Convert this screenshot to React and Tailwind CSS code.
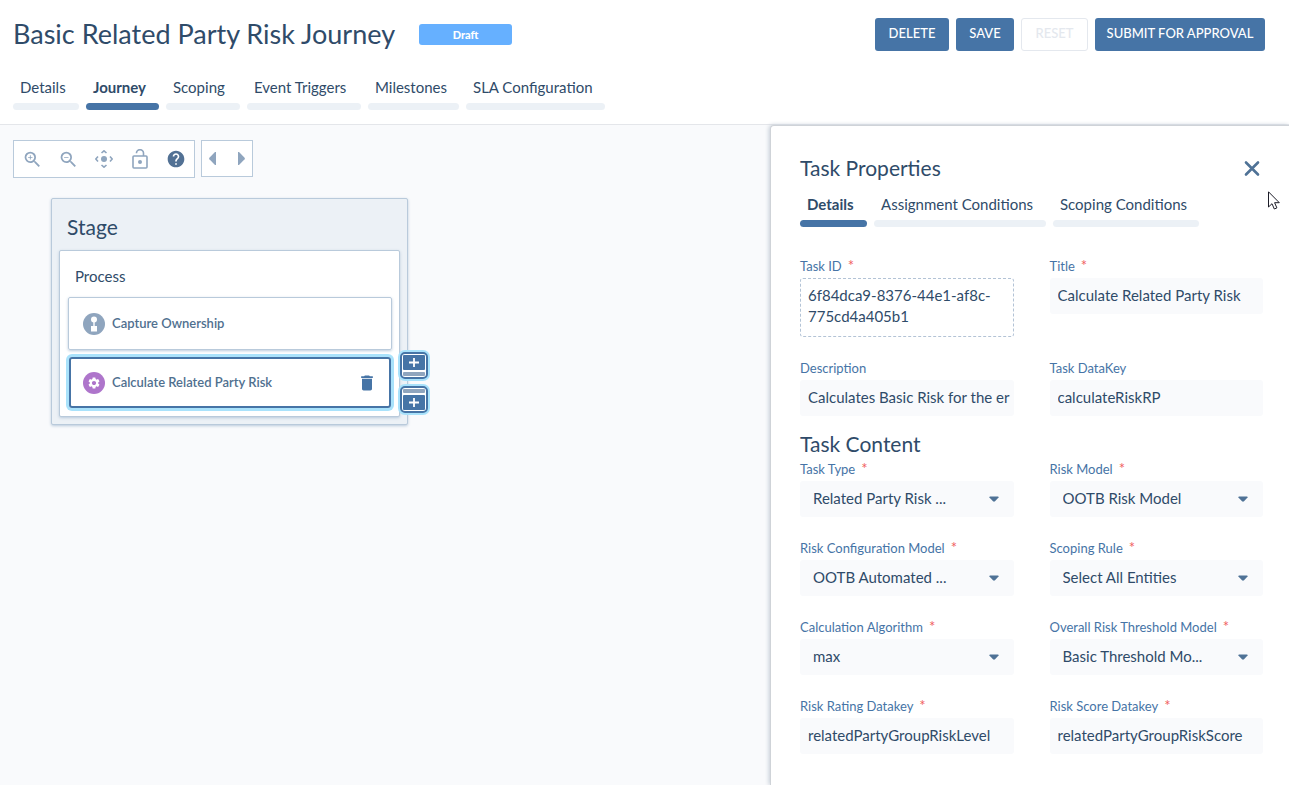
import React, { useState } from 'react';
import { MdDelete, MdHelp, MdSettings, MdZoomIn, MdZoomOut } from 'react-icons/md';

const journeyTabs = [
  { label: 'Details', width: 'w-[66px]' },
  { label: 'Journey', width: 'w-[73px]' },
  { label: 'Scoping', width: 'w-[74px]' },
  { label: 'Event Triggers', width: 'w-[114px]' },
  { label: 'Milestones', width: 'w-[91px]' },
  { label: 'SLA Configuration', width: 'w-[139px]' },
];

const taskTabs = [
  { label: 'Details', width: 'w-[67px]' },
  { label: 'Assignment Conditions', width: 'w-[172px]' },
  { label: 'Scoping Conditions', width: 'w-[146px]' },
];

function Tabs({ tabs, initial, label }) {
  const [active, setActive] = useState(initial);
  return (
    <div role="tablist" aria-label={label} className="flex gap-[7px]">
      {tabs.map((tab) => {
        const on = tab.label === active;
        return (
          <button
            key={tab.label}
            type="button"
            role="tab"
            aria-selected={on}
            onClick={() => setActive(tab.label)}
            className={`${tab.width} text-left text-[15px] leading-[18px] whitespace-nowrap text-[#2f4b69] ${on ? 'font-bold' : ''}`}
          >
            <span className="block pl-[7px]">{tab.label}</span>
            <span className={`mt-[7px] block h-[7px] rounded-full ${on ? 'bg-[#4674a6]' : 'bg-[#ecf1f6]'}`} />
          </button>
        );
      })}
    </div>
  );
}

function ActionButton({ children, width, disabled }) {
  return (
    <button
      type="button"
      disabled={disabled}
      className={`${width} h-[33px] rounded-[3px] text-[13px] font-medium whitespace-nowrap ${
        disabled ? 'border border-[#e4e8ee] bg-white text-[#e4e8ee]' : 'bg-[#4674a6] text-white'
      }`}
    >
      {children}
    </button>
  );
}

function Field({ id, label, required, children }) {
  return (
    <div className="min-w-0">
      <label htmlFor={id} className="block pb-0.5 text-[13px] leading-5 whitespace-nowrap text-[#4674a6]">
        {label}
        {required && <span className="ml-1.5 text-[15px] leading-none text-[#f0605d]">*</span>}
      </label>
      {children}
    </div>
  );
}

function TextField({ id, label, value, required }) {
  return (
    <Field id={id} label={label} required={required}>
      <input
        id={id}
        type="text"
        defaultValue={value}
        className="block h-9 w-full rounded-[3px] bg-[#f9fafc] pr-1 pb-0.5 pl-2 text-[15px] text-[#2f4b69]"
      />
    </Field>
  );
}

function SelectField({ id, label, value }) {
  return (
    <Field id={id} label={label} required>
      <div className="relative">
        <select
          id={id}
          defaultValue={value}
          className="block h-9 w-full appearance-none rounded-[3px] bg-[#f9fafc] pr-10 pb-0.5 pl-[13px] text-[15px] text-[#2f4b69]"
        >
          <option>{value}</option>
        </select>
        <svg
          viewBox="0 0 10 6"
          className="pointer-events-none absolute top-[15px] right-[15px] h-1.5 w-2.5 fill-[#4f7296]"
          aria-hidden="true"
        >
          <path d="M1 .5h8q1 0 .6.9L6 5.300q-1 .9-2 0L.4 1.400Q0 .5 1 .5z" />
        </svg>
      </div>
    </Field>
  );
}

function RecenterIcon() {
  return (
    <svg viewBox="0 0 18 18" className="size-[18px]" fill="none" stroke="currentColor" strokeWidth="1.600" aria-hidden="true">
      <circle cx="9" cy="9" r="3" fill="currentColor" stroke="none" />
      <path d="M6.500 3 9 .8 11.500 3M6.500 15 9 17.200 11.500 15M3 6.500.8 9 3 11.500M15 6.500 17.200 9 15 11.500" />
    </svg>
  );
}

function UnlockIcon() {
  return (
    <svg viewBox="0 0 16 20" className="h-5 w-4" fill="none" stroke="currentColor" strokeWidth="1.600" aria-hidden="true">
      <rect x="1" y="7" width="14" height="12" rx="1" />
      <path d="M4.500 4.300a3.500 3.500 0 0 1 7-.3v3" />
      <circle cx="8" cy="13" r="2" fill="currentColor" stroke="none" />
    </svg>
  );
}

function Triangle({ d }) {
  return (
    <svg viewBox="0 0 7 13" className="h-[13px] w-[7px] fill-[#8fa5be]" aria-hidden="true">
      <path d={d} />
    </svg>
  );
}

function ToolButton({ label, children }) {
  return (
    <button type="button" aria-label={label} className="flex h-9 w-9 items-center justify-center text-[#8fa5be]">
      {children}
    </button>
  );
}

function InsertButton({ label, below }) {
  return (
    <button type="button" aria-label={label} className="block rounded-[5px] border-2 border-[#4674a6] bg-white ring-2 ring-[#a9e2fb]">
      <svg viewBox="0 0 24 23" className="h-[23px] w-6" aria-hidden="true">
        <rect x="1" y={below ? 1 : 18} width="22" height="4" rx="1" fill="#8fa5be" />
        <rect x="1" y={below ? 7 : 1} width="22" height="15" rx="1" fill="#4674a6" />
        <path d={below ? 'M12 10v9M7 14.500h10' : 'M12 4v9M7 8.500h10'} stroke="#fff" strokeWidth="1.800" />
      </svg>
    </button>
  );
}

function Stage() {
  return (
    <section className="relative mt-5 ml-[38px] w-[357px] rounded-[2px] border border-[#b9cadb] bg-[#ecf1f6] px-[7px] pb-[7px] shadow-[0_1px_3px_#b9cadb]">
      <h2 className="px-2 pt-3.5 pb-[9px] text-[21px] leading-7 text-[#2f4b69]">Stage</h2>
      <div className="rounded-[2px] border border-[#b9cadb] bg-white pr-[7px] pb-2 pl-2 shadow-[0_1px_3px_#b9cadb]">
        <h3 className="px-[7px] pt-[15px] pb-[11px] text-[15px] leading-5 text-[#2f4b69]">Process</h3>
        <div className="flex h-[53px] items-center gap-[7px] rounded-[2px] border border-[#b9cadb] px-3.5 shadow-[0_1px_3px_#b9cadb]">
          <svg viewBox="0 0 22 22" className="size-[22px]" aria-hidden="true">
            <circle cx="11" cy="11" r="11" fill="#8fa5be" />
            <circle cx="11" cy="6.500" r="3" fill="#fff" />
            <path d="M10.300 9h1.400v4h2.300v5.500H8V13h2.300z" fill="#fff" />
          </svg>
          <span className="text-[13px] font-semibold text-[#50708f]">Capture Ownership</span>
        </div>
        <div className="mx-px mt-[7px] flex h-[51px] items-center gap-[7px] rounded-[3px] border-2 border-[#4674a6] px-3 ring-3 ring-[#a9e2fb]">
          <span className="flex size-[22px] items-center justify-center rounded-full bg-[#ae75cb] text-white">
            <MdSettings size={14} />
          </span>
          <span className="text-[13px] font-semibold text-[#50708f]">Calculate Related Party Risk</span>
          <button type="button" aria-label="Delete task" className="ml-auto text-[#4674a6]">
            <MdDelete size={20} />
          </button>
        </div>
      </div>
      {/* insert handles sit on the right edge of the selected task */}
      <div className="absolute top-[153px] -right-[21px] flex flex-col gap-[7px]">
        <InsertButton label="Insert task above" />
        <InsertButton label="Insert task below" below />
      </div>
    </section>
  );
}

function Canvas() {
  return (
    <main className="min-w-0 flex-1 px-[13px] pt-[15px]">
      <div className="flex items-start gap-1.5">
        <div className="flex border border-[#b9cadb] bg-white">
          <ToolButton label="Zoom in"><MdZoomIn size={21} /></ToolButton>
          <ToolButton label="Zoom out"><MdZoomOut size={21} /></ToolButton>
          <ToolButton label="Recenter"><RecenterIcon /></ToolButton>
          <ToolButton label="Unlock"><UnlockIcon /></ToolButton>
          <ToolButton label="Help"><MdHelp size={20} className="text-[#527194]" /></ToolButton>
        </div>
        <div className="flex h-[37px] w-[52px] justify-between border border-[#b9cadb] bg-white px-[7px]">
          <button type="button" aria-label="Previous"><Triangle d="M7 0v13H6L.4 7.200q-.6-.7 0-1.400L6 0z" /></button>
          <button type="button" aria-label="Next"><Triangle d="M0 0v13h1l5.600-5.800q.6-.7 0-1.400L1 0z" /></button>
        </div>
      </div>
      <Stage />
    </main>
  );
}

function TaskProperties() {
  return (
    <aside className="relative w-[519px] shrink-0 rounded-tl-[4px] border-t border-l border-[#cfd3d8] bg-white pt-7 pr-[26px] pb-[30px] pl-[29px] shadow-[-1px_0_4px_#c3cbd5]">
      <div className="flex items-center justify-between">
        <h2 className="text-[21px] leading-7 text-[#2f4b69]">Task Properties</h2>
        <button type="button" aria-label="Close" className="text-[#4f7296]">
          <svg viewBox="0 0 22 22" className="size-[22px]" stroke="currentColor" strokeWidth="2.600" strokeLinecap="round" aria-hidden="true">
            <path d="M5 5.500l12 12M17 5.500 5 17.500" />
          </svg>
        </button>
      </div>
      <div className="mt-[13px]">
        <Tabs tabs={taskTabs} initial="Details" label="Task properties" />
      </div>

      <div className="mt-[29px] grid grid-cols-2 gap-x-9 gap-y-[21px]">
        <Field id="task-id" label="Task ID" required>
          <textarea
            id="task-id"
            readOnly
            rows={2}
            defaultValue="6f84dca9-8376-44e1-af8c-775cd4a405b1"
            className="block h-[59px] w-full resize-none overflow-hidden rounded-[3px] border border-dashed border-[#b3c3d6] px-[7px] py-1.5 text-[15px] leading-[21px] text-[#2f4b69]"
          />
        </Field>
        <TextField id="title" label="Title" value="Calculate Related Party Risk" required />
        <TextField id="description" label="Description" value="Calculates Basic Risk for the er" />
        <TextField id="task-datakey" label="Task DataKey" value="calculateRiskRP" />
      </div>

      <h2 className="mt-3.5 mb-px text-[21px] leading-7 text-[#2f4b69]">Task Content</h2>
      <div className="grid grid-cols-2 gap-x-9 gap-y-[21px]">
        <SelectField id="task-type" label="Task Type" value="Related Party Risk ..." />
        <SelectField id="risk-model" label="Risk Model" value="OOTB Risk Model" />
        <SelectField id="risk-config" label="Risk Configuration Model" value="OOTB Automated ..." />
        <SelectField id="scoping-rule" label="Scoping Rule" value="Select All Entities" />
        <SelectField id="algorithm" label="Calculation Algorithm" value="max" />
        <SelectField id="threshold" label="Overall Risk Threshold Model" value="Basic Threshold Mo..." />
        <TextField id="rating-key" label="Risk Rating Datakey" value="relatedPartyGroupRiskLevel" required />
        <TextField id="score-key" label="Risk Score Datakey" value="relatedPartyGroupRiskScore" required />
      </div>

      {/* mouse pointer */}
      <svg viewBox="0 0 12 19" className="pointer-events-none absolute top-[65px] right-[9px] h-[19px] w-3" aria-hidden="true">
        <path
          d="M.5.800v15.200l3.500-3.300 2.300 5.300 2.600-1.100-2.300-5.200h4.700z"
          fill="#fff"
          stroke="#1c1c28"
          strokeLinejoin="round"
        />
      </svg>
    </aside>
  );
}

export default function App() {
  return (
    <div className="flex min-h-screen flex-col bg-[#f9fafc] font-[Lato,sans-serif]">
      <header className="border-b border-[#e4e6ea] bg-white px-[13px] pt-4 pb-3.5">
        <div className="flex items-center pr-[11px]">
          <h1 className="text-[27px] leading-9 whitespace-nowrap text-[#2f4b69]">Basic Related Party Risk Journey</h1>
          <span className="ml-6 w-[93px] rounded-[3px] bg-[#66b0ff] text-center text-[11px] leading-[21px] font-black text-white">
            Draft
          </span>
          <div className="ml-auto flex gap-[7px]">
            <ActionButton width="w-[74px]">DELETE</ActionButton>
            <ActionButton width="w-[58px]">SAVE</ActionButton>
            <ActionButton width="w-[67px]" disabled>RESET</ActionButton>
            <ActionButton width="w-[170px]">SUBMIT FOR APPROVAL</ActionButton>
          </div>
        </div>
        <div className="mt-[26px]">
          <Tabs tabs={journeyTabs} initial="Journey" label="Journey sections" />
        </div>
      </header>
      <div className="flex flex-1">
        <Canvas />
        <TaskProperties />
      </div>
    </div>
  );
}
